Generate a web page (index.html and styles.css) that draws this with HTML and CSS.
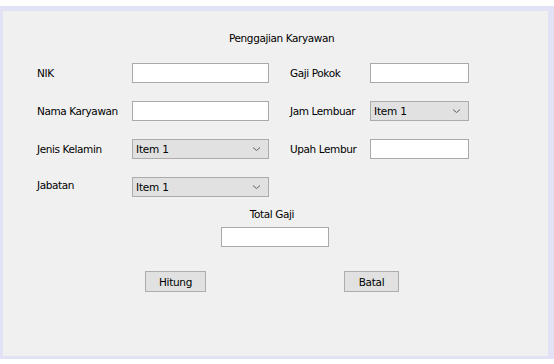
FILE: index.html
```html
<!DOCTYPE html>
<html lang="id">
<head>
<meta charset="UTF-8">
<meta name="viewport" content="width=device-width, initial-scale=1.0">
<link rel="stylesheet" href="styles.css">
<title>Penggajian Karyawan</title>
</head>
<body>
  <div class="frame">
    <div class="panel">
      <div class="title">Penggajian Karyawan</div>

      <div class="form">
        <label class="lbl">NIK</label>
        <input type="text" class="field">
        <span></span>
        <label class="lbl">Gaji Pokok</label>
        <input type="text" class="field">

        <label class="lbl">Nama Karyawan</label>
        <input type="text" class="field">
        <span></span>
        <label class="lbl">Jam Lembuar</label>
        <div class="combo"><span>Item 1</span><svg width="9" height="6" viewBox="0 0 9 6"><path d="M1 1.5 L4.5 4.5 L8 1.5" fill="none" stroke="#606060" stroke-width="1"/></svg></div>

        <label class="lbl">Jenis Kelamin</label>
        <div class="combo"><span>Item 1</span><svg width="9" height="6" viewBox="0 0 9 6"><path d="M1 1.5 L4.5 4.5 L8 1.5" fill="none" stroke="#606060" stroke-width="1"/></svg></div>
        <span></span>
        <label class="lbl">Upah Lembur</label>
        <input type="text" class="field">

        <label class="lbl lbl-up">Jabatan</label>
        <div class="combo"><span>Item 1</span><svg width="9" height="6" viewBox="0 0 9 6"><path d="M1 1.5 L4.5 4.5 L8 1.5" fill="none" stroke="#606060" stroke-width="1"/></svg></div>
      </div>

      <div class="total">
        <label class="lbl total-lbl">Total Gaji</label>
        <input type="text" class="field total-field">
      </div>

      <div class="buttons">
        <button class="btn btn-hitung">Hitung</button>
        <button class="btn btn-batal">Batal</button>
      </div>
    </div>
  </div>
</body>
</html>
```

FILE: styles.css
```css
* {
  box-sizing: border-box;
  margin: 0;
  padding: 0;
}

body {
  background-color: #ffffff;
  font-family: "DejaVu Sans", "Noto Sans", sans-serif;
  font-size: 10.5px;
  color: #000000;
}

/* window frame around the form */
.frame {
  margin-top: 6px;
  width: 554px;
  height: 353px;
  border-top: 5px solid #e2e2f6;
  border-left: 3px solid #e2e2f6;
  border-right: 6px solid #e2e2f6;
  border-bottom: 3px solid #e2e2f6;
}

.panel {
  height: 100%;
  background-color: #f0f0f0;
  padding: 20px 0 0 34px;
}

.title {
  height: 14px;
  line-height: 14px;
  padding-left: 192px;
  letter-spacing: -0.4px;
}

.form {
  display: grid;
  grid-template-columns: 95px 137px 21px 80px 99px;
  grid-auto-rows: 20px;
  row-gap: 18px;
  margin-top: 18px;
  align-items: center;
}

.lbl {
  line-height: 14px;
  letter-spacing: -0.4px;
}

.lbl-up {
  margin-top: -5px;
}

.field {
  height: 20px;
  background-color: #ffffff;
  border: 1px solid #a9a9a9;
  font: inherit;
}

.combo {
  height: 20px;
  background-color: #e1e1e1;
  border: 1px solid #acacac;
  display: flex;
  align-items: center;
  justify-content: space-between;
  padding: 0 7px 0 3px;
}

.combo span {
  letter-spacing: -0.2px;
}

.total {
  display: flex;
  flex-direction: column;
  align-items: center;
  width: 476px;
  margin-top: 10px;
}

.total-lbl {
  padding-right: 6px;
}

.total-field {
  width: 108px;
  margin-top: 6px;
}

.buttons {
  display: flex;
  gap: 138px;
  padding-left: 108px;
  margin-top: 24px;
}

.btn {
  height: 21px;
  background-color: #e1e1e1;
  border: 1px solid #adadad;
  font: inherit;
  letter-spacing: -0.3px;
  color: #000000;
}

.btn-hitung {
  width: 61px;
}

.btn-batal {
  width: 55px;
}
```
